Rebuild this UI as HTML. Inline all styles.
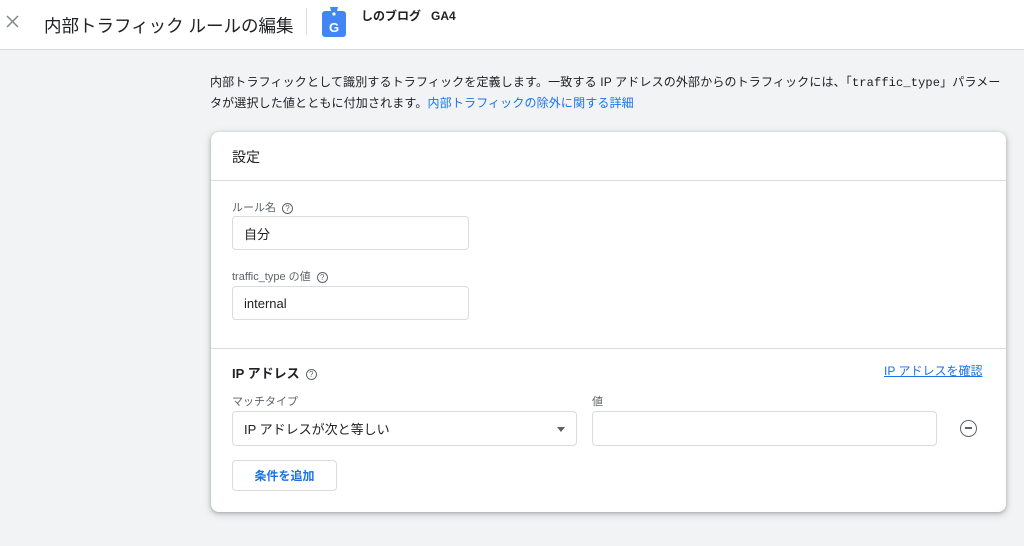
<!DOCTYPE html>
<html><head><meta charset="utf-8"><style>
*{box-sizing:border-box;margin:0;padding:0}
body{width:1024px;height:546px;background:#f1f3f4;font-family:"Liberation Sans","Noto Sans CJK JP",sans-serif;color:#202124;position:relative;overflow:hidden}
.top{position:absolute;left:0;top:0;width:1024px;height:50px;background:#fff;border-bottom:1px solid #dadce0}
.abs{position:absolute;white-space:nowrap}
.card{position:absolute;left:211px;top:132px;width:795px;height:380px;background:#fff;border-radius:8px;box-shadow:0 1px 3px rgba(60,64,67,.3),0 2px 6px 2px rgba(60,64,67,.15)}
.inp{position:absolute;border:1px solid #dadce0;border-radius:4px;background:#fff;font-size:13px;padding-left:11px;display:flex;align-items:center}
.lbl{font-size:11px;color:#5f6368}
.q{display:inline-block;width:11px;height:11px;border:1px solid #5f6368;border-radius:50%;font-size:8px;text-align:center;line-height:9px;color:#5f6368;vertical-align:middle;margin-left:6px}
</style></head><body>
<div class="top">
<svg class="abs" style="left:6px;top:15px" width="13" height="13" viewBox="0 0 13 13"><path d="M1 1L12 12M12 1L1 12" stroke="#80868b" stroke-width="1.5"/></svg>
<div class="abs" style="left:44px;top:13px;font-size:17.5px;color:#202124">内部トラフィック ルールの編集</div>
<div style="position:absolute;left:306px;top:8px;width:1px;height:27px;background:#dadce0"></div>
<svg class="abs" style="left:321px;top:5px" width="26" height="32" viewBox="0 0 26 32"><path d="M9 2h8l-1 4h6a3 3 0 0 1 3 3v20a3 3 0 0 1-3 3H4a3 3 0 0 1-3-3V9a3 3 0 0 1 3-3h6z" fill="#4285f4"/><circle cx="13" cy="9" r="1.6" fill="#fff"/><text x="13" y="27" font-size="13" fill="#fff" text-anchor="middle" font-family="Liberation Sans" font-weight="bold">G</text></svg>
<div class="abs" style="left:361px;top:7px;font-size:12px;font-weight:bold">しのブログ&nbsp;&nbsp;&nbsp;GA4</div>
</div>
<div class="abs" style="left:210px;top:72px;font-size:12px;line-height:20px;color:#202124;letter-spacing:0.15px">内部トラフィックとして識別するトラフィックを定義します。一致する IP アドレスの外部からのトラフィックには、「<span style="font-family:'Liberation Mono',monospace">traffic_type</span>」パラメー<br>タが選択した値とともに付加されます。<span style="color:#1a73e8">内部トラフィックの除外に関する詳細</span></div>
<div class="card">
<div class="abs" style="left:21px;top:15px;font-size:14px">設定</div>
<div style="position:absolute;left:0;top:48px;width:795px;height:1px;background:#dadce0"></div>
<div class="abs lbl" style="left:21px;top:67px">ルール名<span class="q">?</span></div>
<div class="inp" style="left:21px;top:84px;width:237px;height:34px">自分</div>
<div class="abs lbl" style="left:21px;top:136px">traffic_type の値<span class="q">?</span></div>
<div class="inp" style="left:21px;top:154px;width:237px;height:34px">internal</div>
<div style="position:absolute;left:0;top:216px;width:795px;height:1px;background:#dadce0"></div>
<div class="abs" style="left:21px;top:231px;font-size:13px;font-weight:bold">IP アドレス<span class="q" style="font-weight:normal">?</span></div>
<div class="abs" style="left:673px;top:230px;font-size:12px;color:#1a73e8;text-decoration:underline">IP アドレスを確認</div>
<div class="abs lbl" style="left:21px;top:261px">マッチタイプ</div>
<div class="abs lbl" style="left:381px;top:261px">値</div>
<div class="inp" style="left:21px;top:279px;width:345px;height:35px">IP アドレスが次と等しい<span style="position:absolute;right:11px;top:15px;border-left:4px solid transparent;border-right:4px solid transparent;border-top:5px solid #5f6368"></span></div>
<div class="inp" style="left:381px;top:279px;width:345px;height:35px"></div>
<div style="position:absolute;left:749px;top:288px;width:17px;height:17px;border:1.6px solid #5f6368;border-radius:50%"><div style="position:absolute;left:3.5px;top:6.2px;width:7px;height:1.6px;background:#5f6368"></div></div>
<div class="inp" style="left:21px;top:328px;width:105px;height:31px;justify-content:center;padding:0;color:#1a73e8;font-size:12px;font-weight:bold">条件を追加</div>
</div>
</body></html>
